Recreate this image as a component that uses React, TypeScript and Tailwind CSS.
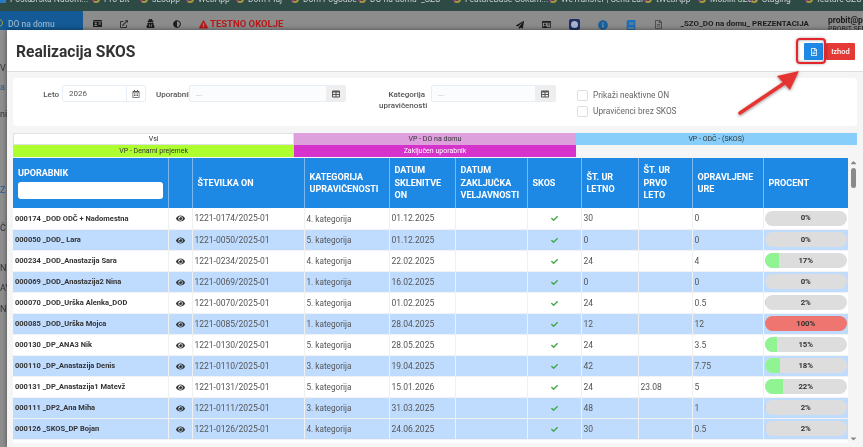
import React from "react";
import { FaAdjust, FaBook, FaCheck, FaExclamationTriangle, FaExternalLinkAlt, FaEye, FaInfoCircle, FaPaperPlane, FaRegCalendarAlt, FaRegFileAlt, FaTable, FaUserSecret, FaIdCard, FaRegIdCard, FaCaretUp, FaCaretDown } from "react-icons/fa";

const bookmarks = [
  { label: "Pošta", w: "w-[30px]", icon: "square" },
  { label: "Urška Nadom...", w: "w-[62px]", icon: "none" },
  { label: "Pro-Bit", w: "w-[48px]", icon: "ring" },
  { label: "sLoupp", w: "w-[46px]", icon: "ring" },
  { label: "WebApp", w: "w-[50px]", icon: "ring" },
  { label: "Dom Plaj", w: "w-[55px]", icon: "ring" },
  { label: "Dom Pogodbe", w: "w-[67px]", icon: "ring" },
  { label: "DO na domu", w: "w-[63px]", icon: "ring" },
  { label: "_SZO", w: "w-[32px]", icon: "none" },
  { label: "FeatureBase Gokam...", w: "w-[96px]", icon: "ring" },
  { label: "WeTransfer | Send Lar", w: "w-[95px]", icon: "ring" },
  { label: "tWebApp", w: "w-[54px]", icon: "ring" },
  { label: "Mobilk SZOT", w: "w-[52px]", icon: "ring" },
  { label: "Staging", w: "w-[55px]", icon: "ring" },
  { label: "feature SZOT", w: "w-[58px]", icon: "ring" },
];

const rows = [
  { n: "000174 _DOD ODČ + Nadomestna", on: "1221-0174/2025-01", k: "4. kategorija", d: "01.12.2025", l: "30", p: "", u: "0", pct: 0, blue: false },
  { n: "000050 _DOD_ Lara", on: "1221-0050/2025-01", k: "5. kategorija", d: "01.12.2025", l: "0", p: "", u: "0", pct: 0, blue: true },
  { n: "000234 _DOD_Anastazija Sara", on: "1221-0234/2025-01", k: "4. kategorija", d: "22.02.2025", l: "24", p: "", u: "4", pct: 17, blue: false },
  { n: "000069 _DOD_Anastazija2 Nina", on: "1221-0069/2025-01", k: "1. kategorija", d: "16.02.2025", l: "0", p: "", u: "0", pct: 0, blue: true },
  { n: "000070 _DOD_Urška Alenka_DOD", on: "1221-0070/2025-01", k: "5. kategorija", d: "01.02.2025", l: "24", p: "", u: "0.5", pct: 2, blue: false },
  { n: "000085 _DOD_Urška Mojca", on: "1221-0085/2025-01", k: "1. kategorija", d: "28.04.2025", l: "12", p: "", u: "12", pct: 100, blue: true },
  { n: "000130 _DP_ANA3 Nik", on: "1221-0130/2025-01", k: "5. kategorija", d: "28.05.2025", l: "24", p: "", u: "3.5", pct: 15, blue: false },
  { n: "000110 _DP_Anastazija Denis", on: "1221-0110/2025-01", k: "3. kategorija", d: "19.04.2025", l: "42", p: "", u: "7.75", pct: 18, blue: true },
  { n: "000131 _DP_Anastazija1 Matevž", on: "1221-0131/2025-01", k: "5. kategorija", d: "15.01.2026", l: "24", p: "23.08", u: "5", pct: 22, blue: false },
  { n: "000111 _DP2_Ana Miha", on: "1221-0111/2025-01", k: "3. kategorija", d: "31.03.2025", l: "48", p: "", u: "1", pct: 2, blue: true },
  { n: "000126 _SKOS_DP Bojan", on: "1221-0126/2025-01", k: "4. kategorija", d: "24.06.2025", l: "30", p: "", u: "0.5", pct: 2, blue: true },
];

const widths = [155, 24, 112, 85, 66, 72, 54, 57, 54, 71, 85];
const heads = ["", "", "ŠTEVILKA ON", "KATEGORIJA UPRAVIČENOSTI", "DATUM SKLENITVE ON", "DATUM ZAKLJUČKA VELJAVNOSTI", "SKOS", "ŠT. UR LETNO", "ŠT. UR PRVO LETO", "OPRAVLJENE URE", "PROCENT"];

function Bookmark({ label, w, icon }: { label: string; w: string; icon: string }) {
  return (
    <span className={`flex shrink-0 items-center gap-[4px] whitespace-nowrap ${w}`}>
      {icon === "ring" && <span className="h-[8px] w-[8px] shrink-0 rounded-full border-2 border-[#a89a3c] border-l-[#b0309a]" />}
      {icon === "square" && <span className="h-[8px] w-[6px] shrink-0 bg-[#2a78c8]" />}
      <span>{label}</span>
    </span>
  );
}

function Progress({ pct }: { pct: number }) {
  const full = pct >= 100;
  return (
    <div className={`relative mx-auto h-[15px] w-[82px] overflow-hidden rounded-full ${full ? "bg-[#ee7570]" : "bg-[#dddddd]"}`}>
      {!full && <div className="h-full bg-[#90f492]" style={{ width: `${pct}%` }} />}
      <span className="absolute inset-0 flex items-center justify-center text-[7.8px] font-bold text-[#333]">{pct}%</span>
    </div>
  );
}

export default function App() {
  return (
    <div className="relative h-[447px] w-[863px] overflow-hidden bg-[#8f8f8f] blur-[0.4px] font-['Roboto',sans-serif]">
      {/* Browser bookmarks */}
      <div className="h-[11px] overflow-hidden bg-[#2e4a45] text-[8.5px] leading-[10px] text-[#c8d0ce]">
        <div className="-mt-[6px] flex">
          {bookmarks.map((b) => <Bookmark key={b.label} {...b} />)}
        </div>
      </div>

      {/* App bar */}
      <div className="flex h-[19px] items-start overflow-hidden bg-[#8c8c8c] pt-[8px]">
        <div className="-mt-[8px] flex h-[19px] w-[83px] shrink-0 items-start bg-[#135a96] pt-[8px] text-[8.5px] font-medium leading-[10px] text-[#8fb0cc]">
          <span className="-ml-[5px] mr-[5px] h-[8px] w-[8px] rounded-full border border-[#a89a3c]" />DO na domu
        </div>
        <div className="ml-[10px] flex items-center gap-[18px] text-[9px] text-[#1c1c1c]">
          <FaIdCard className="text-[9px]" />
          <FaExternalLinkAlt className="text-[8px] text-[#333]" />
          <FaUserSecret className="text-[9px]" />
          <FaAdjust className="text-[8px]" />
        </div>
        <div className="ml-[18px] flex items-center gap-[2px] whitespace-nowrap text-[9.5px] font-bold leading-[10px] text-[#b81818]">
          <FaExclamationTriangle className="text-[9px]" /> TESTNO OKOLJE
        </div>
        <div className="ml-[233px] flex items-center gap-[18px] text-[9px] text-[#1c1c1c]">
          <FaPaperPlane className="text-[8px]" />
          <FaRegIdCard className="text-[9px]" />
          <span className="flex h-[11px] w-[11px] items-center justify-center rounded-[2px] bg-[#1f2f66]">
            <span className="h-[7px] w-[7px] rounded-full bg-[#a8b4cc]" />
          </span>
          <FaInfoCircle className="text-[10px] text-[#15609f]" />
          <FaBook className="text-[10px] text-[#1c6fb8]" />
          <FaRegFileAlt className="text-[9px] text-[#444]" />
        </div>
        <div className="ml-[17px] whitespace-nowrap text-[8px] font-bold leading-[10px] text-[#1c1c1c]">_SZO_DO na domu_ PREZENTACIJA</div>
        <div className="-mt-[3px] ml-[19px] flex flex-col whitespace-nowrap font-bold leading-[9px] text-[#1c1c1c]">
          <span className="text-[8.5px]">probit@probit</span>
          <span className="text-[7px] font-normal">PROBIT SERV</span>
        </div>
      </div>

      {/* Sidebar remains behind the dialog */}
      <div className="flex w-[7px] flex-col overflow-hidden whitespace-nowrap text-[9px] text-[#333]">
        <span className="mt-[32px]">V</span>
        <span className="mt-[5px] text-[#1c5f9a]">a</span>
        <span className="mt-[14px]">ni</span>
        <span className="mt-[62px] text-[#1c5f9a]">Z</span>
        <span className="mt-[25px]">Č</span>
        <span className="mt-[26px]">N</span>
        <span className="mt-[7px]">AV</span>
        <span className="mt-[7px]">NI</span>
      </div>

      {/* Dialog */}
      <div className="absolute bottom-0 left-[7px] right-0 top-[30px] flex flex-col bg-[#f5f5f5] shadow-[0_0_5px_rgba(0,0,0,0.5)]">
        <div className="flex h-[42px] items-start justify-between border-b border-[#dedede] bg-white pl-[9px] pr-[8px]">
          <h1 className="mt-[12px] text-[15.6px] font-bold leading-[20px] text-[#333]">Realizacija SKOS</h1>
          <div className="mt-[13px] flex">
            <div className="relative">
              <button className="flex h-[17px] w-[19px] items-center justify-center rounded-[1px] bg-[#1e88e5] text-[8px] text-white">
                <FaRegFileAlt />
              </button>
              <span className="absolute -bottom-[4px] -left-[8px] -right-[3px] -top-[5px] rounded-[4px] border-2 border-[#e3262c] shadow-[inset_0_0_3px_rgba(0,0,0,0.45),0_0_3px_rgba(0,0,0,0.35)]" />
            </div>
            <button className="ml-[3px] h-[17px] w-[29px] rounded-[1px] bg-[#e53935] text-[7.5px] font-medium text-white">Izhod</button>
          </div>
        </div>

        <div className="mx-[6px] mt-[6px] flex h-[48px] rounded-[4px] bg-white text-[8px] text-[#555]">
          <span className="mt-[11px] w-[46px] text-right font-medium leading-[11px]">Leto</span>
          <div className="ml-[3px] mt-[7px] flex h-[17px] w-[84px] rounded-[2px] border border-[#e8eef5]">
            <span className="flex-1 pl-[6px] leading-[15px]">2026</span>
            <span className="flex w-[19px] items-center justify-center border-l border-[#e8eef5] text-[8px]"><FaRegCalendarAlt /></span>
          </div>
          <span className="ml-[10px] mt-[11px] w-[33px] overflow-hidden whitespace-nowrap font-medium leading-[11px]">Uporabnik</span>
          <div className="mt-[7px] flex h-[17px] w-[157px] rounded-[2px] border border-[#e8eef5] bg-[#fbfcfd]">
            <span className="flex-1 pl-[6px] leading-[15px] text-[#aaa]">...</span>
            <span className="flex w-[19px] items-center justify-center bg-[#eeeeee] text-[8px]"><FaTable /></span>
          </div>
          <span className="ml-[33px] mt-[11px] w-[46px] text-right font-medium leading-[11px]">Kategorija upravičenosti</span>
          <div className="ml-[6px] mt-[7px] flex h-[17px] w-[125px] rounded-[2px] border border-[#e8eef5] bg-[#fbfcfd]">
            <span className="flex-1 pl-[6px] leading-[15px] text-[#aaa]">...</span>
            <span className="flex w-[20px] items-center justify-center bg-[#eeeeee] text-[8px]"><FaTable /></span>
          </div>
          <div className="ml-[21px] mt-[12px] flex flex-col gap-[5px] text-[8.3px] text-[#666]">
            <label className="flex h-[11px] items-center gap-[5px]"><span className="h-[11px] w-[11px] rounded-[2px] border border-[#ddd]" />Prikaži neaktivne ON</label>
            <label className="flex h-[11px] items-center gap-[5px]"><span className="h-[11px] w-[11px] rounded-[2px] border border-[#ddd]" />Upravičenci brez SKOS</label>
          </div>
        </div>

        <div className="mx-[6px] mt-[7px] grid grid-cols-3 text-center text-[7px] leading-[12px] text-[#333]">
          <div className="border border-[#e0e0e0] bg-white leading-[10px]">Vsi</div>
          <div className="bg-[#dda0dd]">VP - DO na domu</div>
          <div className="bg-[#87cefa]">VP - ODČ - (SKOS)</div>
          <div className="bg-[#adff2f]">VP - Denarni prejemek</div>
          <div className="bg-[#d633cc] text-white">Zaključen uporabnik</div>
          <div />
        </div>

        <div className="ml-[6px] mr-[5px] mt-px flex h-[285px]">
          <div className="flex-1 overflow-hidden bg-white">
            <table className="w-[835px] table-fixed border-collapse text-[8.5px] text-[#555]">
              <colgroup>
                {widths.map((w, i) => <col key={i} style={{ width: w }} />)}
              </colgroup>
              <thead>
                <tr className="h-[50px] bg-[#1e88e5] text-left text-[9px] font-bold leading-[12.5px] text-white">
                  <th className="border-r border-[#7ab8f0] px-[5px] align-middle">
                    <div className="mb-[3px]">UPORABNIK</div>
                    <div className="h-[17px] rounded-[3px] bg-white" />
                  </th>
                  {heads.slice(1).map((h, i) => (
                    <th key={i} className="border-r border-[#7ab8f0] px-[5px] align-middle font-bold last:border-r-0">{h}</th>
                  ))}
                </tr>
              </thead>
              <tbody>
                {rows.map((r) => (
                  <tr key={r.n} className={`h-[21px] border-b border-[#f2f2f2] ${r.blue ? "bg-[#bfdcff]" : "bg-white"}`}>
                    <td className="truncate border-r border-[#f0f0f0] pl-[2px] pt-px text-[7.5px] font-bold text-[#333]">{r.n}</td>
                    <td className="border-r border-[#f0f0f0] pt-px text-center text-[9px] text-[#333]"><FaEye className="mx-auto" /></td>
                    <td className="border-r border-[#f0f0f0] pl-[2px] pt-px">{r.on}</td>
                    <td className="border-r border-[#f0f0f0] pl-[2px] pt-px text-[8.2px]">{r.k}</td>
                    <td className="border-r border-[#f0f0f0] pl-[2px] pt-px">{r.d}</td>
                    <td className="border-r border-[#f0f0f0]" />
                    <td className="border-r border-[#f0f0f0] pt-px"><FaCheck className="mx-auto text-[7px] text-[#43a847]" /></td>
                    <td className="border-r border-[#f0f0f0] pl-[2px] pt-px">{r.l}</td>
                    <td className="border-r border-[#f0f0f0] pl-[2px] pt-px">{r.p}</td>
                    <td className="border-r border-[#f0f0f0] pl-[2px] pt-px">{r.u}</td>
                    <td><Progress pct={r.pct} /></td>
                  </tr>
                ))}
                <tr className="h-[21px] bg-white"><td colSpan={11} /></tr>
              </tbody>
            </table>
          </div>
          <div className="flex w-[10px] flex-col items-center justify-between text-[#888]">
            <div className="flex flex-col items-center">
              <FaCaretUp className="text-[9px]" />
              <div className="mt-px h-[20px] w-[5px] rounded-full bg-[#8a8a8a]" />
            </div>
            <FaCaretDown className="text-[9px]" />
          </div>
        </div>
      </div>

      {/* Annotation arrow */}
      <svg className="absolute left-[730px] top-[60px]" width="80" height="62" viewBox="0 0 80 62">
        <defs>
          <filter id="s" x="-20%" y="-20%" width="140%" height="140%"><feDropShadow dx="0" dy="1" stdDeviation="1.5" floodColor="#000" floodOpacity="0.45" /></filter>
        </defs>
        <g filter="url(#s)">
          <path d="M10 53 L56 22" stroke="#e53530" strokeWidth="3.5" strokeLinecap="round" />
          <path d="M69 11 L47 16 L60 30 Z" fill="#e53530" />
        </g>
      </svg>
    </div>
  );
}
